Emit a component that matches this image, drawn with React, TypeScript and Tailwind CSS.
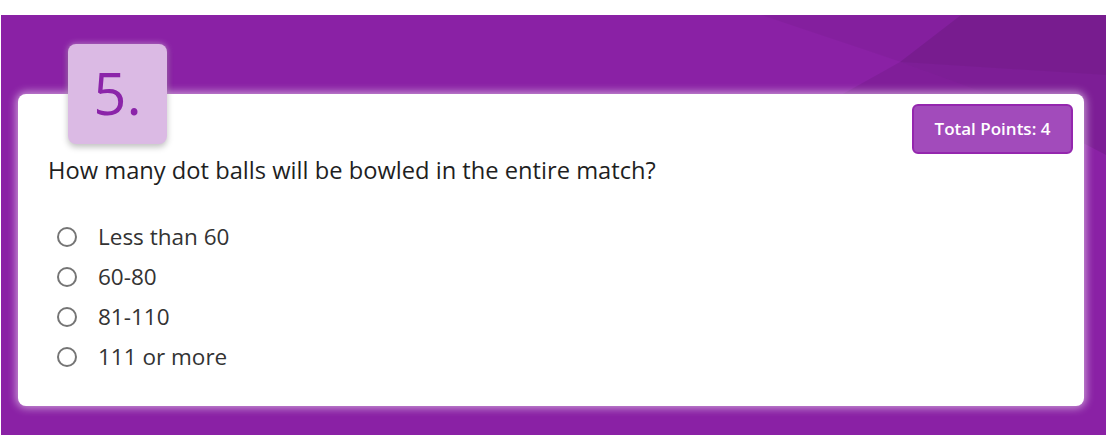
import React from "react";

const options = ["Less than 60", "60-80", "81-110", "111 or more"];

export default function App() {
  return (
    <div className="w-[1106px] h-[447px] bg-white pt-[15px] pl-[1px]" style={{ fontFamily: "'Open Sans', 'Liberation Sans', sans-serif" }}>
      <div className="relative h-[420px] w-[1105px] bg-[#8a21a5] overflow-hidden pl-[17px] pr-[22px] pt-[79px]">
        <svg className="absolute inset-0 pointer-events-none" width="1105" height="420" viewBox="0 0 1105 420">
          <polygon points="760,0 1105,0 1105,60 900,47" fill="#000" opacity="0.04" />
          <polygon points="840,80 899,47 990,80" fill="#000" opacity="0.07" />
          <polygon points="899,47 960,0 1105,0 1105,140 990,80" fill="#000" opacity="0.09" />
        </svg>
        <div className="relative h-[312px] w-full rounded-[8px] bg-white shadow-[0_0_8px_2px_rgba(255,255,255,0.55)] flex flex-col">
          <div className="absolute left-[50px] top-[-50px] w-[99px] h-[100px] rounded-[8px] bg-[#dbbae4] flex items-center justify-center shadow-[0_3px_6px_rgba(0,0,0,0.25),0_0_6px_rgba(255,255,255,0.5)]">
            <span className="text-[58px] leading-none text-[#8b24a9] pb-[2px]">5.</span>
          </div>
          <div className="flex justify-end pt-[10px] pr-[11px]">
            <div className="w-[161px] h-[50px] rounded-[6px] bg-[#a24bbb] border-2 border-[#9427ae] flex items-center justify-center text-white text-[17px] font-semibold">
              Total Points: 4
            </div>
          </div>
          <div className="pl-[30px] text-[23.7px] leading-[28px] text-[#1f1f1f] mt-[2px]">
            How many dot balls will be bowled in the entire match?
          </div>
          <div className="mt-[33px] pl-[39px] flex flex-col">
            {options.map((o) => (
              <label key={o} className="h-[40px] flex items-center">
                <span className="w-[20px] h-[20px] rounded-full border-2 border-[#757575] bg-white" />
                <span className="ml-[21px] text-[22.5px] text-[#333333]">{o}</span>
              </label>
            ))}
          </div>
        </div>
      </div>
    </div>
  );
}
